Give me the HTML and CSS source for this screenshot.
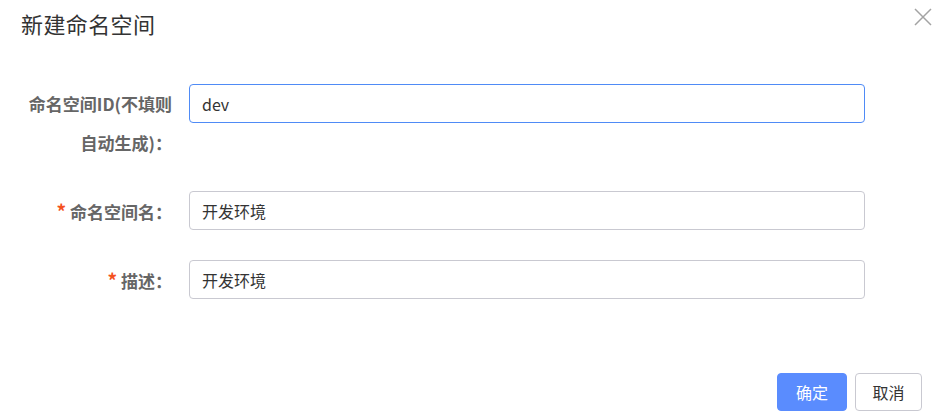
FILE: index.html
```html
<!DOCTYPE html>
<html lang="zh-CN">
<head>
<meta charset="utf-8">
<title>新建命名空间</title>
<link rel="stylesheet" href="styles.css">
</head>
<body>
<div class="dialog">
  <div class="header">
    <div class="title">新建命名空间</div>
    <button class="close" aria-label="关闭">
      <svg width="18" height="18" viewBox="0 0 18 18"><path d="M1 1 L17 17 M17 1 L1 17" stroke="#a3a3a3" stroke-width="1.5" fill="none"/></svg>
    </button>
  </div>
  <div class="form">
    <div class="row">
      <div class="label">命名空间ID(不填则<br>自动生成)：</div>
      <div class="field"><input class="input focused" value="dev"></div>
    </div>
    <div class="row">
      <div class="label"><span class="req">*</span> 命名空间名：</div>
      <div class="field"><input class="input" value="开发环境"></div>
    </div>
    <div class="row">
      <div class="label"><span class="req">*</span> 描述：</div>
      <div class="field"><input class="input" value="开发环境"></div>
    </div>
  </div>
  <div class="footer">
    <button class="btn primary">确定</button>
    <button class="btn">取消</button>
  </div>
</div>
</body>
</html>
```
FILE: styles.css
```css
html, body {
  margin: 0;
  padding: 0;
  background: #fff;
}
body {
  font-family: "Noto Sans CJK SC", "Noto Sans", sans-serif;
  color: #333;
}
.dialog {
  width: 945px;
  height: 420px;
  display: flex;
  flex-direction: column;
  box-sizing: border-box;
}
.header {
  display: flex;
  justify-content: space-between;
  align-items: flex-start;
  height: 84px;
  padding: 0 13px 0 21px;
  box-sizing: border-box;
}
.title {
  font-size: 22px;
  line-height: 26px;
  margin-top: 10px;
  color: #333;
  letter-spacing: 0.4px;
}
.close {
  border: 0;
  background: none;
  padding: 0;
  margin-top: 8px;
  width: 18px;
  height: 18px;
  cursor: pointer;
}
.close svg { display: block; }
.form {
  display: flex;
  flex-direction: column;
  gap: 29px;
}
.row {
  display: flex;
  align-items: flex-start;
  gap: 17px;
}
.label {
  width: 172px;
  text-align: right;
  font-size: 17px;
  font-weight: bold;
  line-height: 39px;
  color: #666;
  white-space: nowrap;
}
.req {
  color: #f4511e;
  font-weight: bold;
  font-size: 19px;
}
.field {
  width: 676px;
}
.input {
  display: block;
  width: 100%;
  height: 39px;
  box-sizing: border-box;
  border: 1px solid #c9c9d1;
  border-radius: 4px;
  padding: 0 12px;
  font-family: "Noto Sans CJK SC", "Noto Sans", sans-serif;
  font-size: 16px;
  color: #333;
  outline: none;
  background: #fff;
}
.input.focused {
  border-color: #4f8bf6;
}
.footer {
  margin-top: auto;
  display: flex;
  justify-content: flex-end;
  gap: 8px;
  padding: 0 23px 9px 0;
}
.btn {
  height: 38px;
  width: 67px;
  box-sizing: border-box;
  border: 1px solid #c9c9d1;
  border-radius: 4px;
  background: #fff;
  color: #333;
  font-family: "Noto Sans CJK SC", "Noto Sans", sans-serif;
  font-size: 16px;
  padding: 0;
}
.btn.primary {
  width: 70px;
  background: #5a8cfe;
  border-color: #5a8cfe;
  color: #fff;
}
```
